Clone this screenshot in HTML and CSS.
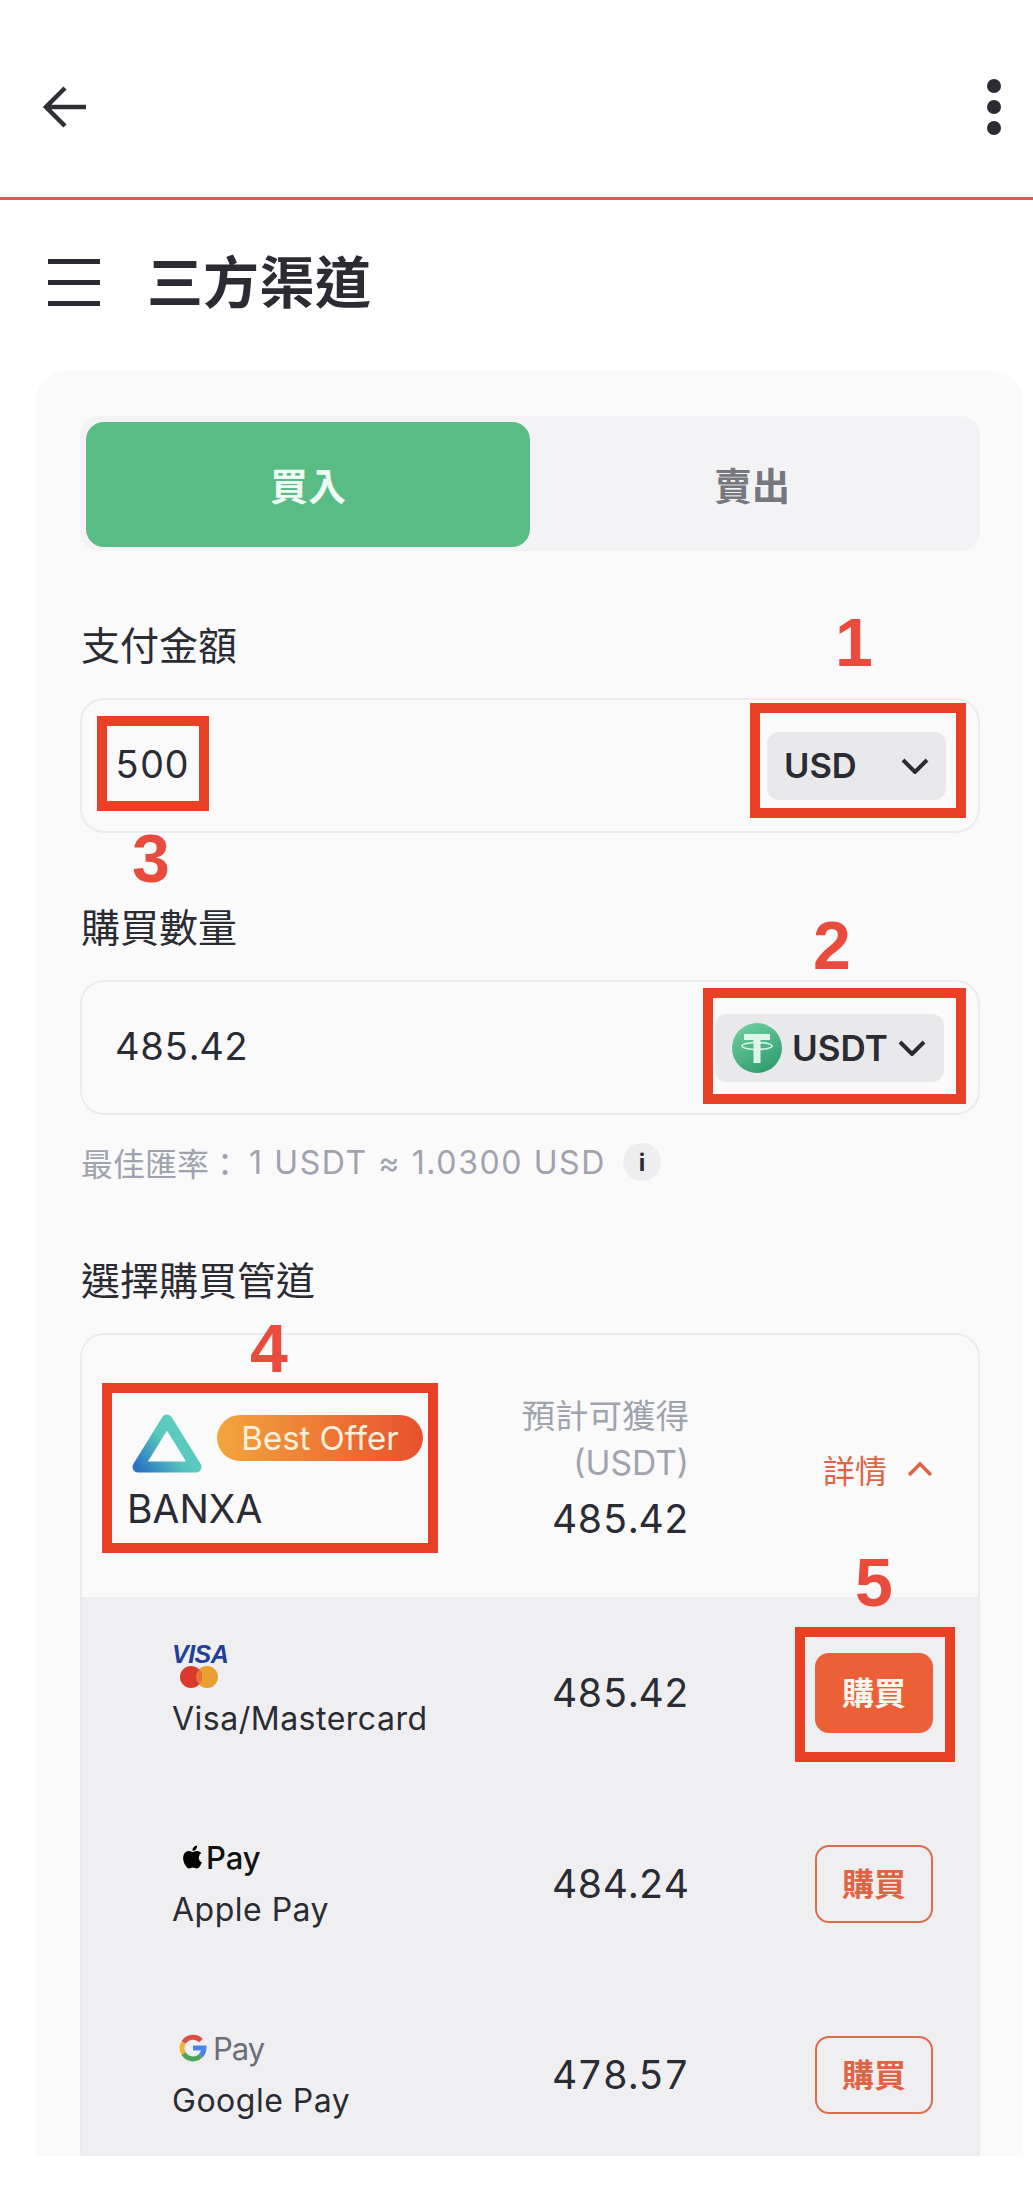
FILE: index.html
```html
<!DOCTYPE html>
<html lang="zh-Hant">
<head>
    <meta charset="UTF-8">
    <meta name="viewport" content="width=device-width, initial-scale=1.0">
    <title>三方渠道</title>
    <link rel="stylesheet" href="styles.css">
</head>

<body>

    <header class="topbar">
        <svg class="back-icon" viewBox="0 0 44 42" aria-hidden="true">
            <path d="M22 2 L3 21 L22 40 M3 21 H43" />
        </svg>
        <div class="more-icon"><span></span><span></span><span></span></div>
    </header>

    <div class="title-row">
        <div class="menu-icon"><span></span><span></span><span></span></div>
        <h1>三方渠道</h1>
    </div>

    <main class="card">
        <div class="tabs">
            <div class="tab tab-active">買入</div>
            <div class="tab">賣出</div>
        </div>

        <div class="field-label">支付金額</div>
        <div class="field">
            <span class="field-value">500</span>
            <div class="select select-usd">
                <span>USD</span>
                <svg class="chevron" viewBox="0 0 28 16" aria-hidden="true"><path d="M2 2 L14 14 L26 2" /></svg>
            </div>
        </div>

        <div class="field-label">購買數量</div>
        <div class="field">
            <span class="field-value">485.42</span>
            <div class="select select-usdt">
                <svg class="tether" viewBox="0 0 50 50" aria-hidden="true">
                    <defs>
                        <linearGradient id="tetherFill" x1="0.2" y1="0" x2="0.7" y2="1">
                            <stop offset="0" stop-color="#6fcf9f" />
                            <stop offset="1" stop-color="#2f9c6e" />
                        </linearGradient>
                    </defs>
                    <circle cx="25" cy="25" r="25" fill="url(#tetherFill)" />
                    <rect x="12" y="11" width="26" height="6" fill="#dff5ea" />
                    <rect x="21.5" y="11" width="7" height="29" fill="#dff5ea" />
                    <ellipse cx="25" cy="23" rx="15" ry="3.5" fill="none" stroke="#dff5ea" stroke-width="1.6" />
                </svg>
                <span>USDT</span>
                <svg class="chevron" viewBox="0 0 28 16" aria-hidden="true"><path d="M2 2 L14 14 L26 2" /></svg>
            </div>
        </div>

        <div class="rate">
            <span>最佳匯率：</span>
            <span class="rate-value">1 USDT ≈ 1.0300 USD</span>
            <span class="info-dot">i</span>
        </div>

        <div class="field-label">選擇購買管道</div>
        <section class="channels">
            <div class="provider">
                <div class="provider-info">
                    <div class="provider-logo">
                        <svg class="banxa-logo" viewBox="0 0 70 60" aria-hidden="true">
                            <defs>
                                <linearGradient id="banxaFill" x1="0" y1="1" x2="1" y2="0.3">
                                    <stop offset="0" stop-color="#2a74c4" />
                                    <stop offset="0.55" stop-color="#58c6bd" />
                                    <stop offset="1" stop-color="#5fd0bf" />
                                </linearGradient>
                            </defs>
                            <path d="M35 7 L6 54 H64 Z" fill="none" stroke="url(#banxaFill)" stroke-width="11" stroke-linejoin="round" />
                        </svg>
                        <span class="badge">Best Offer</span>
                    </div>
                    <div class="provider-name">BANXA</div>
                </div>
                <div class="estimate">
                    <div class="estimate-label">預計可獲得</div>
                    <div class="estimate-label">(USDT)</div>
                    <div class="amount estimate-amount">485.42</div>
                </div>
                <div class="details">
                    <span>詳情</span>
                    <svg class="chevron-up" viewBox="0 0 26 16" aria-hidden="true"><path d="M2 14 L13 3 L24 14" /></svg>
                </div>
            </div>

            <div class="method">
                <div>
                    <div class="method-logo logo-visa">
                        <span class="visa-text">VISA</span>
                        <svg class="mc-logo" viewBox="0 0 40 22" aria-hidden="true">
                            <circle cx="28" cy="11" r="11" fill="#e8a033" />
                            <circle cx="12" cy="11" r="11" fill="#d93a2b" />
                            <path d="M20 3.4 a11 11 0 0 1 0 15.2 a11 11 0 0 1 0 -15.2" fill="#e8743a" />
                        </svg>
                    </div>
                    <div class="method-name">Visa/Mastercard</div>
                </div>
                <div class="amount">485.42</div>
                <button class="buy buy-solid" type="button">購買</button>
            </div>

            <div class="method">
                <div>
                    <div class="method-logo logo-apple">
                        <svg class="apple-logo" viewBox="0 0 24 24" aria-hidden="true">
                            <path d="M12.152 6.896c-.948 0-2.415-1.078-3.96-1.04-2.04.027-3.91 1.183-4.961 3.014-2.117 3.675-.546 9.103 1.519 12.09 1.013 1.454 2.208 3.09 3.792 3.039 1.52-.065 2.09-.987 3.935-.987 1.831 0 2.35.987 3.96.948 1.637-.026 2.676-1.48 3.676-2.948 1.156-1.688 1.636-3.325 1.662-3.415-.039-.013-3.182-1.221-3.22-4.857-.026-3.04 2.48-4.494 2.597-4.559-1.429-2.09-3.623-2.324-4.39-2.376-2-.156-3.675 1.09-4.61 1.09zM15.53 3.83c.843-1.012 1.4-2.427 1.245-3.83-1.207.052-2.662.805-3.532 1.818-.78.896-1.454 2.338-1.273 3.714 1.338.104 2.715-.688 3.559-1.701" />
                        </svg>
                        <span class="pay-dark">Pay</span>
                    </div>
                    <div class="method-name">Apple Pay</div>
                </div>
                <div class="amount">484.24</div>
                <button class="buy" type="button">購買</button>
            </div>

            <div class="method">
                <div>
                    <div class="method-logo logo-google">
                        <svg class="google-logo" viewBox="0 0 28 28" aria-hidden="true">
                            <g fill="none" stroke-width="5">
                                <path d="M22 6.6 A11 11 0 0 0 4.6 8.5" stroke="#d9503f" />
                                <path d="M4.6 8.5 A11 11 0 0 0 4.6 19.5" stroke="#efb33a" />
                                <path d="M4.6 19.5 A11 11 0 0 0 21.5 22" stroke="#4fa65a" />
                                <path d="M21.5 22 A11 11 0 0 0 25 14 H14" stroke="#4a86e8" />
                            </g>
                        </svg>
                        <span class="pay-grey">Pay</span>
                    </div>
                    <div class="method-name">Google Pay</div>
                </div>
                <div class="amount">478.57</div>
                <button class="buy" type="button">購買</button>
            </div>
        </section>
    </main>

    <!-- red marks drawn on top of the screen -->
    <div class="mark box-usd"></div>
    <div class="mark box-usdt"></div>
    <div class="mark box-amount"></div>
    <div class="mark box-provider"></div>
    <div class="mark box-buy"></div>
    <div class="num num-1">1</div>
    <div class="num num-2">2</div>
    <div class="num num-3">3</div>
    <div class="num num-4">4</div>
    <div class="num num-5">5</div>

</body>
</html>
```

FILE: styles.css
```css
/* Page */
body {
    margin: 0;
    position: relative;
    width: 1033px;
    height: 2196px;
    overflow: hidden;
    background-color: white;
    color: #2a2b33;
    font-family: Inter, "Noto Sans CJK TC", sans-serif;
}

/* Top bar */
.topbar {
    height: 200px;
    box-sizing: border-box;
    padding: 16px 32px 0 43px;
    display: flex;
    align-items: center;
    justify-content: space-between;
    border-bottom: 3px solid #d4604a;
}

.back-icon {
    width: 44px;
    height: 42px;
    fill: none;
    stroke: #2f3036;
    stroke-width: 4.5;
}

.more-icon {
    display: flex;
    flex-direction: column;
    gap: 7px;
}

.more-icon span {
    width: 14px;
    height: 14px;
    border-radius: 50%;
    background-color: #2a2b33;
}

/* Title */
.title-row {
    height: 171px;
    box-sizing: border-box;
    padding: 0 0 6px 48px;
    display: flex;
    align-items: center;
    gap: 47px;
}

.menu-icon {
    display: flex;
    flex-direction: column;
    gap: 16px;
}

.menu-icon span {
    width: 52px;
    height: 5px;
    background-color: #2a2b33;
}

h1 {
    margin: 0;
    font-size: 56px;
    line-height: 70px;
    font-weight: 700;
}

/* Card */
.card {
    height: 1785px;
    margin: 0 10px 0 36px;
    padding: 45px 43px 0 44px;
    box-sizing: border-box;
    overflow: hidden;
    background-color: #fafafb;
    border-radius: 30px 30px 0 0;
}

.tabs {
    height: 135px;
    box-sizing: border-box;
    padding: 6px 6px 4px 6px;
    display: flex;
    background-color: #f3f3f5;
    border-radius: 20px;
}

.tab {
    flex: 1;
    display: flex;
    align-items: center;
    justify-content: center;
    padding-bottom: 3px;
    border-radius: 18px;
    font-size: 38px;
    font-weight: 700;
    color: #77787f;
}

.tab-active {
    background-color: #58bc84;
    color: #eefaf3;
}

.field-label {
    margin: 68px 0 25px 1px;
    height: 54px;
    line-height: 54px;
    font-size: 39px;
}

.field {
    height: 135px;
    box-sizing: border-box;
    padding: 0 32px 0 33px;
    display: flex;
    align-items: center;
    justify-content: space-between;
    border: 2px solid #ececef;
    border-radius: 24px;
}

.field-value {
    margin-bottom: 4px;
    font-size: 38px;
    font-variant-numeric: tabular-nums;
}

.select {
    display: flex;
    align-items: center;
    height: 68px;
    box-sizing: border-box;
    background-color: #e9e9eb;
    border-radius: 12px;
    font-size: 35px;
    font-weight: 600;
}

.select-usd {
    width: 179px;
    padding: 0 17px 0 17px;
    justify-content: space-between;
    font-size: 34.5px;
}

.select-usdt {
    width: 229px;
    padding: 0 18px 0 17px;
    gap: 10px;
    margin-right: 2px;
}

.chevron {
    width: 28px;
    height: 16px;
    fill: none;
    stroke: #2a2b33;
    stroke-width: 4;
}

.tether {
    width: 50px;
    height: 50px;
    flex: none;
}

.rate {
    margin: 23px 0 0 1px;
    height: 48px;
    display: flex;
    align-items: center;
    font-size: 32px;
    color: #a0a3ad;
}

.rate-value {
    margin-left: 8px;
    letter-spacing: 1.6px;
    white-space: nowrap;
}

.info-dot {
    width: 38px;
    height: 38px;
    margin-left: 17px;
    border-radius: 50%;
    display: flex;
    align-items: center;
    justify-content: center;
    background-color: #eeeef0;
    color: #2a2b33;
    font-size: 24px;
    font-weight: 700;
}

/* Channel list */
.channels {
    border: 2px solid #ececef;
    border-bottom: 0;
    border-radius: 24px 24px 0 0;
}

.provider {
    height: 262px;
    box-sizing: border-box;
    padding: 0 45px 0 46px;
    display: grid;
    grid-template-columns: minmax(0, 1fr) auto 110px;
    column-gap: 134px;
    align-items: center;
}

.provider-info {
    align-self: start;
    padding-top: 78px;
}

.provider-logo {
    display: flex;
    align-items: center;
    gap: 15px;
    margin-left: 4px;
}

.banxa-logo {
    width: 70px;
    height: 60px;
    flex: none;
}

.badge {
    flex: none;
    height: 46px;
    width: 206px;
    margin-top: -10px;
    display: flex;
    align-items: center;
    justify-content: center;
    border-radius: 23px;
    background: linear-gradient(90deg, #f2a53c, #e8502e);
    color: #fdf0dc;
    font-size: 33px;
    white-space: nowrap;
}

.provider-name {
    margin: 11px 0 0 -1px;
    font-size: 39px;
    line-height: 50px;
}

.estimate {
    align-self: start;
    padding-top: 58px;
    text-align: right;
    white-space: nowrap;
}

.estimate-label {
    font-size: 33.5px;
    line-height: 47px;
    color: #a0a3ad;
}

.amount {
    font-size: 39px;
    line-height: 56px;
    text-align: right;
    font-variant-numeric: tabular-nums;
}

.estimate-amount {
    margin-top: 4px;
}

.details {
    display: flex;
    align-items: center;
    justify-content: space-between;
    margin-top: 6px;
    font-size: 32px;
    color: #df6443;
}

.chevron-up {
    width: 26px;
    height: 16px;
    fill: none;
    stroke: #df6443;
    stroke-width: 3.5;
}

.method {
    height: 191px;
    box-sizing: border-box;
    padding: 0 45px 0 90px;
    display: grid;
    grid-template-columns: minmax(0, 1fr) auto 118px;
    column-gap: 126px;
    align-items: center;
    background-color: #efeff1;
}

.method-logo {
    height: 46px;
    margin-bottom: 7px;
    display: flex;
    align-items: center;
}

.logo-visa {
    flex-direction: column;
    align-items: flex-start;
    height: 46px;
}

.visa-text {
    font-family: "Liberation Sans", sans-serif;
    font-style: italic;
    font-weight: 700;
    font-size: 25px;
    line-height: 22px;
    color: #1f3f9a;
    letter-spacing: -0.5px;
}

.mc-logo {
    width: 40px;
    height: 22px;
    margin: 1px 0 0 7px;
}

.logo-apple {
    padding-left: 9px;
    gap: 2px;
}

.apple-logo {
    width: 23px;
    height: 26px;
    fill: #000000;
}

.pay-dark {
    font-size: 31px;
    font-weight: 500;
    color: #111111;
}

.logo-google {
    padding-left: 7px;
    gap: 6px;
}

.google-logo {
    width: 28px;
    height: 28px;
}

.pay-grey {
    font-size: 31px;
    letter-spacing: -1px;
    color: #6b6e78;
}

.method-name {
    height: 46px;
    line-height: 46px;
    font-size: 32px;
    letter-spacing: 0.5px;
    white-space: nowrap;
}

.buy {
    width: 118px;
    height: 78px;
    padding: 0 0 3px;
    box-sizing: border-box;
    border: 2px solid #df6b4c;
    border-radius: 14px;
    background-color: transparent;
    color: #df6443;
    font-family: inherit;
    font-size: 32px;
    font-weight: 700;
}

.buy-solid {
    height: 80px;
    background-color: #ec5f37;
    border-color: #ec5f37;
    color: #fff6ee;
}

/* Red marks over the screenshot */
.mark {
    position: absolute;
    box-sizing: border-box;
    border: 10px solid #ea4126;
}

.box-usd { left: 750px; top: 703px; width: 216px; height: 115px; }
.box-usdt { left: 703px; top: 988px; width: 263px; height: 116px; }
.box-amount { left: 97px; top: 716px; width: 112px; height: 95px; }
.box-provider { left: 102px; top: 1383px; width: 336px; height: 170px; }
.box-buy { left: 795px; top: 1627px; width: 160px; height: 135px; }

.num {
    position: absolute;
    width: 60px;
    margin-left: -30px;
    text-align: center;
    font-family: "Liberation Sans", sans-serif;
    font-weight: 700;
    font-size: 68px;
    line-height: 70px;
    color: #e94b3c;
}

.num-1 { left: 854px; top: 607px; }
.num-2 { left: 832px; top: 910px; }
.num-3 { left: 151px; top: 823px; }
.num-4 { left: 269px; top: 1313px; }
.num-5 { left: 874px; top: 1547px; }
```
